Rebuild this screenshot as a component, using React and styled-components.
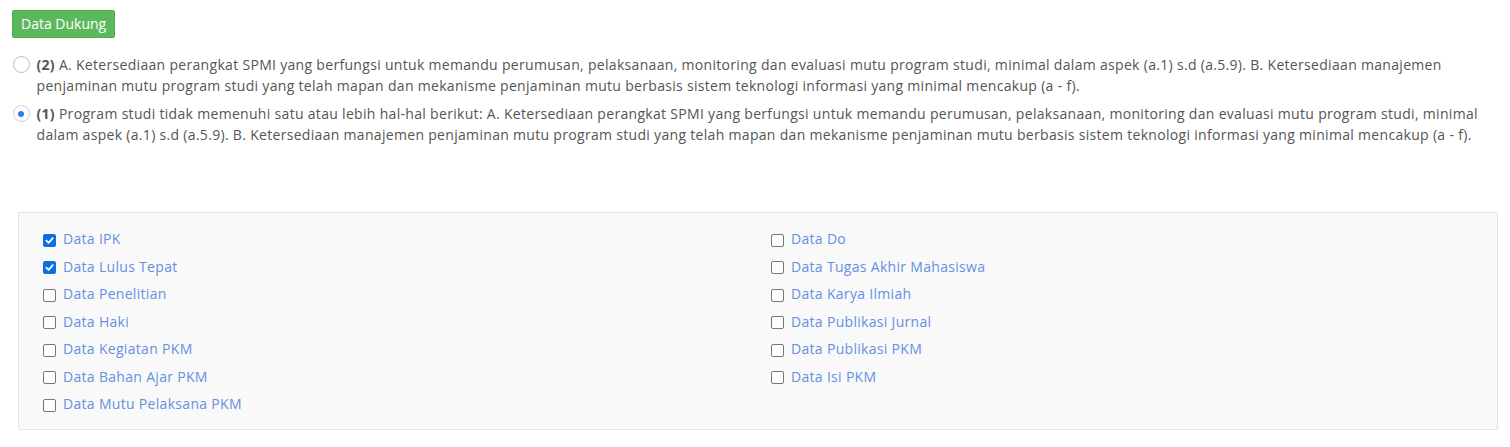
import React from "react";
import styled, { createGlobalStyle } from "styled-components";

const Global = createGlobalStyle`
  html, body { margin: 0; padding: 0; background: #fff; }
  body { font-family: "Open Sans", "Noto Sans", sans-serif; font-size: 14px; color: #555; }
  * { box-sizing: border-box; }
`;

const Page = styled.div`
  padding: 10px 12px 18px 12px;
`;

const Button = styled.button`
  display: inline-block;
  background: #5cb85c;
  color: #fff;
  border: 1px solid #4cae4c;
  border-radius: 2px;
  font-family: "Open Sans", sans-serif;
  font-size: 14px;
  letter-spacing: 0;
  line-height: 18px;
  padding: 4px 8px;
  cursor: pointer;
`;

const Options = styled.div`
  margin-top: 16px;
  display: flex;
  flex-direction: column;
  gap: 7px;
`;

const OptionRow = styled.label`
  display: flex;
  align-items: flex-start;
  gap: 7px;
  line-height: 21px;
  font-size: 14px;
  letter-spacing: 0.31px;
  color: #555;
`;

const Radio = styled.span`
  flex: none;
  width: 17px;
  height: 17px;
  margin-top: 2px;
  margin-left: 0.5px;
  border-radius: 50%;
  border: 1px solid ${(p) => (p.$checked ? "#c8cfd8" : "#bbb")};
  background: #fff;
  display: flex;
  align-items: center;
  justify-content: center;
  &::after {
    content: "";
    width: 6px;
    height: 6px;
    border-radius: 50%;
    background: ${(p) => (p.$checked ? "#2f7fe8" : "transparent")};
  }
`;

const Label = styled.span``;

const Strong = styled.strong`
  font-weight: 700;
`;

const Panel = styled.div`
  margin: 67px 0 0 6px;
  width: 1480px;
  background: #f9f9f9;
  border: 1px solid #e5e5e5;
  padding: 12px 24px 11px 24px;
  display: grid;
  grid-template-columns: 1fr 1fr;
  column-gap: 26px;
`;

const Column = styled.div`
  display: flex;
  flex-direction: column;
`;

const CheckRow = styled.label`
  display: flex;
  align-items: center;
  gap: 7px;
  height: 27.5px;
  font-size: 14px;
  letter-spacing: 0.31px;
  color: #6590e2;
`;

const Box = styled.span`
  flex: none;
  width: 13px;
  height: 13px;
  margin-top: 3px;
  border-radius: 2px;
  border: 1px solid ${(p) => (p.$checked ? "#0b6fe0" : "#767676")};
  background: ${(p) => (p.$checked ? "#0b6fe0" : "#fff")};
  display: flex;
  align-items: center;
  justify-content: center;
`;

const Check = () => (
  <svg width="9" height="9" viewBox="0 0 10 10">
    <path d="M1.5 5.2 L4 7.6 L8.6 2.4" fill="none" stroke="#fff" strokeWidth="2" strokeLinecap="round" strokeLinejoin="round" />
  </svg>
);

const Item = ({ label, checked }) => (
  <CheckRow>
    <Box $checked={checked}>{checked && <Check />}</Box>
    {label}
  </CheckRow>
);

const left = [
  ["Data IPK", true],
  ["Data Lulus Tepat", true],
  ["Data Penelitian", false],
  ["Data Haki", false],
  ["Data Kegiatan PKM", false],
  ["Data Bahan Ajar PKM", false],
  ["Data Mutu Pelaksana PKM", false],
];
const right = [
  ["Data Do", false],
  ["Data Tugas Akhir Mahasiswa", false],
  ["Data Karya Ilmiah", false],
  ["Data Publikasi Jurnal", false],
  ["Data Publikasi PKM", false],
  ["Data Isi PKM", false],
];

export default function App() {
  return (
    <Page>
      <Global />
      <Button>Data Dukung</Button>
      <Options>
        <OptionRow>
          <Radio />
          <Label>
            <Strong>(2)</Strong> A. Ketersediaan perangkat SPMI yang berfungsi untuk memandu perumusan, pelaksanaan, monitoring dan evaluasi mutu program studi, minimal dalam aspek (a.1) s.d (a.5.9). B. Ketersediaan manajemen penjaminan mutu program studi yang telah mapan dan mekanisme penjaminan mutu berbasis sistem teknologi informasi yang minimal mencakup (a - f).
          </Label>
        </OptionRow>
        <OptionRow>
          <Radio $checked />
          <Label>
            <Strong>(1)</Strong> Program studi tidak memenuhi satu atau lebih hal-hal berikut: A. Ketersediaan perangkat SPMI yang berfungsi untuk memandu perumusan, pelaksanaan, monitoring dan evaluasi mutu program studi, minimal dalam aspek (a.1) s.d (a.5.9). B. Ketersediaan manajemen penjaminan mutu program studi yang telah mapan dan mekanisme penjaminan mutu berbasis sistem teknologi informasi yang minimal mencakup (a - f).
          </Label>
        </OptionRow>
      </Options>
      <Panel>
        <Column>
          {left.map(([l, c]) => (
            <Item key={l} label={l} checked={c} />
          ))}
        </Column>
        <Column>
          {right.map(([l, c]) => (
            <Item key={l} label={l} checked={c} />
          ))}
        </Column>
      </Panel>
    </Page>
  );
}
